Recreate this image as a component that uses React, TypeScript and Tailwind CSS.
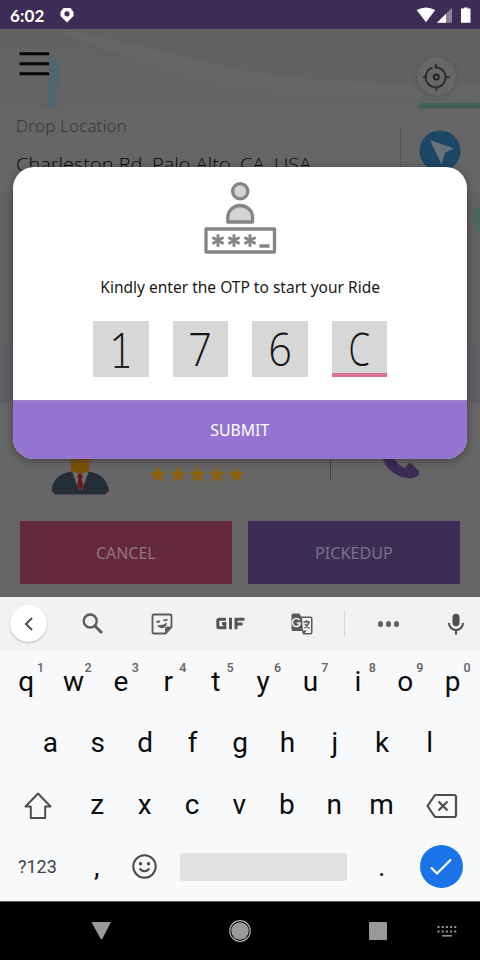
import React from 'react';

const row1 = ['q', 'w', 'e', 'r', 't', 'y', 'u', 'i', 'o', 'p'];
const row2 = ['a', 's', 'd', 'f', 'g', 'h', 'j', 'k', 'l'];
const row3 = ['z', 'x', 'c', 'v', 'b', 'n', 'm'];

function StatusBar() {
  return (
    <header className="flex h-[29px] shrink-0 items-center bg-[#3b2d55] pl-[10px] pr-[9px] text-white">
      <span className="w-[50px] pt-px font-['Lato'] text-[17px] font-bold leading-none tracking-[0.1px]">6:02</span>
      <svg className="h-4 w-[14px]" viewBox="0 0 14 16">
        <path fill="#fff" fillRule="evenodd" d="M3.5 1h7L13.5 5v4L7 15.6.5 9V5ZM7 4.2a2.6 2.6 0 1 0 0 5.2 2.6 2.6 0 0 0 0-5.2Z" />
      </svg>
      <svg className="ml-auto h-4 w-[55px]" viewBox="0 0 55 16">
        <path fill="#fff" d="M.7 3Q10 -2.2 19.2 3L10 15.3Z" />
        <path fill="#8a8199" d="M36 .8V15.8H21Z" />
        <path fill="#fff" d="M30 6.8V15.8H21Z" />
        <path fill="#fff" d="M45 1.6h2.7V.4h4v1.2h2.8V15.8H45Z" />
      </svg>
    </header>
  );
}

function MapHeader() {
  return (
    <div className="relative h-20 shrink-0 overflow-hidden bg-[#626262]">
      <svg className="h-20 w-full" viewBox="0 29 480 80">
        <path fill="#646464" d="M0 48Q110 50 230 77Q350 99 480 96V109H0Z" />
        <path fill="#666666" d="M64 29Q150 48 240 70Q330 86 480 83V97Q340 103 225 86Q140 66 64 33Z" />
        <path fill="#526672" d="M49 59 59.5 60 56 108H47Z" />
        <path fill="#40605a" d="M421 103H480V108.5H419V105Z" />
        <path stroke="#050505" strokeWidth="2.9" d="M19.5 53.8H49M19.5 63.8H49M19.5 73.7H49" />
      </svg>
      <div className="absolute left-[416.5px] top-[28px] h-[39px] w-[39px] rounded-full bg-[#676767] shadow-[0_1px_5px_rgba(0,0,0,0.18)]">
        <svg className="h-full w-full" viewBox="0 0 39 39" fill="none" stroke="#242424" strokeWidth="1.7">
          <path d="M18.8 7V10.700H21.500A10 10 0 1 1 15.300 10.800M19.300 29.500V33.500M6 20H10M29 20H32.500" />
          <circle cx="19.3" cy="20" r="2.5" strokeWidth="2" />
        </svg>
      </div>
    </div>
  );
}

function DropPanel() {
  return (
    <div className="flex h-[84px] shrink-0 bg-[#666666]">
      <div className="ml-4 mt-[7px] w-[384px] whitespace-nowrap font-['Open_Sans'] font-light">
        <p className="w-max origin-left scale-x-[1.06] text-[16px] leading-5 tracking-[0.2px] text-[#343434]">Drop Location</p>
        <p className="mt-4 w-max origin-left scale-x-[1.11] text-[18px] leading-6 text-[#080808]">Charleston Rd, Palo Alto, CA, USA</p>
      </div>
      <div className="mt-[19px] h-[60px] w-px bg-[#575757]" />
      <svg className="ml-[18px] mt-[21px] h-[42px] w-[42px]" viewBox="0 0 42 42">
        <circle cx="21" cy="21" r="20.5" fill="#1d4767" />
        <path fill="#6a7277" d="m11 10 24 8.5-9 4.2-3.5 11.8Z" />
      </svg>
    </div>
  );
}

function DriverCard() {
  return (
    <section className="flex h-[194px] shrink-0 flex-col bg-[#666666]">
      <svg className="h-[118px] w-full" viewBox="0 403 480 118">
        <path fill="#7c5215" d="M67 452H94V459L89 462V470L80 479 71 470V462Z" />
        <path fill="#7e4e07" d="M71 464 80 467 89 464V471L80 475 71 471Z" />
        <path fill="#232e36" d="M72 471.5Q59 473 54 482 51 488 52 491L55 494.5H105L109 491Q109 487 106 482 101 473 88 471.5L80 480Z" />
        <path fill="#6d6c6d" d="M72 471 80 474 89 471 82 490H78.5Z" />
        <path fill="#641a1d" d="m80 473 3 3-1.5 3L83.5 486 80 491 77 486 78.5 479 77 476Z" />
        {[158, 177.7, 197.3, 216.9, 236.5].map((x) => (
          <path key={x} transform={`translate(${x} 474.5)`} fill="#8d6010" d="M0-8.2 2.4-3 8.2-2.4 3.8 1.3 5.1 7.3 0 4.3-5.1 7.3-3.8 1.3-8.2-2.4-2.4-3Z" />
        ))}
        <path stroke="#444" d="M330.5 440V481" />
        <path fill="#3b2d55" d="M383 459Q386 470 399 476 410 480 416 477 420 475 419 471L412 464Q410 462 408 464L405 468Q397 465 394 458Z" />
      </svg>
      <div className="ml-5 flex gap-4 font-['Noto_Sans'] text-[17px] leading-none">
        <div className="flex h-[63px] w-[212px] items-center justify-center bg-[#64293d] text-[#927680]">
          <span className="scale-x-[0.94]">CANCEL</span>
        </div>
        <div className="flex h-[63px] w-[212px] items-center justify-center bg-[#3b2d55] text-[#7a7289]">
          <span className="scale-x-[0.95]">PICKEDUP</span>
        </div>
      </div>
    </section>
  );
}

function OtpIcon() {
  return (
    <svg className="ml-[190.500px] mt-[14px] h-[73px] w-[73px]" viewBox="203.5 181 73 73" fill="none" stroke="#858585" strokeWidth="3.3" strokeLinejoin="round" strokeLinecap="round">
      <circle cx="239.7" cy="191.2" r="7.6" fill="#d4d4d4" />
      <path fill="#d4d4d4" d="M227.3 222V217.5A12.4 12 0 0 1 252.1 217.5V222Z" />
      <rect x="205.5" y="229" width="68.5" height="23" fill="#fff" />
      {[217.5, 233.5, 249.5].map((x) => (
        <path key={x} strokeWidth="3" d={`M${x} 235.5V245.5M${x - 4.5} 238 ${x + 4.5} 243M${x + 4.5} 238 ${x - 4.5} 243`} />
      ))}
      <path strokeLinecap="butt" d="M259 246H269" />
    </svg>
  );
}

function OtpDialog() {
  return (
    <div className="absolute left-[13px] top-[167px] flex h-[292px] w-[454px] flex-col overflow-hidden rounded-[21px] bg-white shadow-[0_2px_8px_rgba(0,0,0,0.35)]">
      <OtpIcon />
      <p className="mt-[21px] whitespace-nowrap text-center font-['Noto_Sans'] text-[16px] leading-6 text-[#191919]">
        <span className="inline-block scale-x-[0.97]">Kindly enter the OTP to start your Ride</span>
      </p>
      <div className="ml-20 mt-[22px] flex gap-6 font-['Open_Sans'] text-[46px] font-[350] leading-none text-[#141414]">
        {['1', '7', '6', 'C'].map((c) => (
          <div key={c} className={'flex h-14 w-[55.5px] items-center justify-center bg-[#d7d7d7] pb-0.5 ' + (c === 'C' ? 'border-b-4 border-[#dc7096] pt-1' : '')}>
            <span className={'relative ' + (c === 'C' ? 'scale-x-[0.75]' : 'scale-x-[0.9]')}>
              {c}
              {c === '1' && <i className="absolute bottom-[3.500px] left-[6px] h-[2px] w-4 bg-[#222]" />}
            </span>
          </div>
        ))}
      </div>
      <button className="mt-auto flex h-[59px] items-center justify-center border-t-2 border-[#9b80cc] bg-[#9473d1] pb-0.5 font-['Noto_Sans'] text-[17px] leading-none text-white">
        <span className="scale-x-[0.93]">SUBMIT</span>
      </button>
    </div>
  );
}

function Toolbar() {
  return (
    <div className="flex h-[53px] items-center bg-[#f1f2f4]">
      <div className="ml-[10px] flex h-[37px] w-[37px] items-center justify-center rounded-full bg-white shadow-[0_1px_2px_rgba(0,0,0,0.25)]">
        <svg className="h-4 w-4" viewBox="0 0 16 16" fill="none" stroke="#555" strokeWidth="2.2"><path d="M11 2 5 8l6 6" /></svg>
      </div>
      <svg className="ml-[34px] mt-px h-6 w-6" viewBox="0 0 24 24" fill="none" stroke="#5b5c5e" strokeWidth="2.4">
        <circle cx="9.2" cy="9" r="6.5" /><path strokeWidth="3" d="m14 14 7 7" />
      </svg>
      <svg className="ml-[45px] h-6 w-6" viewBox="0 0 24 24" fill="none" stroke="#5b5c5e" strokeWidth="1.8">
        <path d="M4 2.500H20Q21.500 2.500 21.500 4V15L15.500 21.500H4Q2.500 21.500 2.500 20V4Q2.500 2.500 4 2.500Z" />
        <path fill="#5b5c5e" stroke="none" d="M22 14.500 15 21.500V17Q15 14.500 17.500 14.500Z" />
        <path d="M6.500 10 10 9.300M13.500 8.500 17.500 7.700" />
        <path fill="#5b5c5e" stroke="none" d="M7.500 13Q13 13.700 17 10.500 16.500 15.500 12.500 16.200 9 16.500 7.500 13Z" />
      </svg>
      <svg className="ml-[42px] h-[13px] w-[29px]" viewBox="0 0 29 13" fill="none" stroke="#555" strokeWidth="3">
        <path d="M10 2.200H3.500Q1.800 2.200 1.800 4V9Q1.800 10.800 3.500 10.800H8.800V6.500H6M14.500.7V12.300M20 12.300V2.200H28.500M20 7H26.500" />
      </svg>
      <svg className="ml-[45px] mt-px h-6 w-6" viewBox="0 0 24 24" fill="#58595b">
        <path d="M3 1.500H9.500L11 4.500H20.500Q22.500 4.500 22.500 6.500V20.500Q22.500 22.500 20.500 22.500H13L12 19H3Q1.500 19 1.500 17.500V3Q1.500 1.500 3 1.500Z" />
        <path fill="#f1f2f4" d="M12 6H21V21H14.500L17 18.500H13Z" />
        <path fill="none" stroke="#f1f2f4" strokeWidth="1.600" d="M9.500 8A4 4 0 1 0 10 12.200V11H6.800" />
        <path fill="none" stroke="#58595b" strokeWidth="1.400" d="M13.500 10H20M16.500 8V10M19 10Q18 14 14.500 16M15 12Q17 15 19.500 16.500" />
      </svg>
      <div className="ml-[30px] h-[27px] w-px bg-[#d5d6d8]" />
      <div className="ml-[32.500px] mt-px flex gap-[2.500px]">
        {[1, 2, 3].map((n) => <i key={n} className="h-[5.500px] w-[5.500px] rounded-full bg-[#606164]" />)}
      </div>
      <svg className="ml-[45px] h-6 w-6" viewBox="0 0 24 24" fill="none" stroke="#4c4d4f">
        <path strokeWidth="7" strokeLinecap="round" d="M12 5.200V10.800" /><path strokeWidth="2" d="M5 11A7 7 0 0 0 19 11M12 18V22.500" />
      </svg>
    </div>
  );
}

function Keyboard() {
  return (
    <section className="h-[304px] shrink-0 bg-[#f7f9fb] font-['Roboto'] text-[28px] leading-none text-[#0c0c0c]">
      <Toolbar />
      <div className="flex h-[61.500px] px-[2.500px]">
        {row1.map((k, i) => (
          <div key={k} className="relative flex w-[47.400px] items-center justify-center pt-[3px]">
            {k}
            <sup className="absolute left-[34.500px] top-[10.500px] text-[12.500px] font-medium leading-[14px] text-[#626366]">{(i + 1) % 10}</sup>
          </div>
        ))}
      </div>
      <div className="flex h-[61.500px] items-center justify-center pt-0.5">
        {row2.map((k) => <div key={k} className="w-[47.400px] text-center">{k}</div>)}
      </div>
      <div className="flex h-[61.500px] items-center pt-0.5">
        <svg className="ml-6 mt-0.5 h-7 w-7" viewBox="0 0 28 28" fill="none" stroke="#4d4e50" strokeWidth="2" strokeLinejoin="round">
          <path d="M14 1.500 26.500 14.500H21.200V26H6.800V14.500H1.500Z" />
        </svg>
        <div className="ml-[21.500px] flex">
          {row3.map((k) => <div key={k} className="w-[47.400px] text-center">{k}</div>)}
        </div>
        <svg className="ml-[20.500px] mt-[3px] h-[26px] w-[32px]" viewBox="0 0 32 26" fill="none" stroke="#4d4e50" strokeWidth="2.200" strokeLinejoin="round">
          <path d="M9 2H28Q30 2 30 4V22Q30 24 28 24H9L1.500 13Z" /><path d="m12.500 8.500 9 9M21.500 8.500l-9 9" />
        </svg>
      </div>
      <div className="flex h-[61.500px] items-center pt-[2.500px]">
        <span className="ml-[18px] w-10 text-[18px] text-[#414244]">?123</span>
        <span className="ml-[36px] w-3">,</span>
        <svg className="ml-[26px] h-[25px] w-[25px]" viewBox="0 0 25 25" fill="none" stroke="#48494b" strokeWidth="2">
          <circle cx="12.500" cy="12.500" r="11.200" /><path d="M7.500 14.500Q12.500 20 17.500 14.500" />
          <circle cx="8.500" cy="9.800" r="1.700" fill="#48494b" stroke="none" /><circle cx="16.500" cy="9.800" r="1.700" fill="#48494b" stroke="none" />
        </svg>
        <div className="ml-[22.500px] h-7 w-[167px] rounded-[3px] bg-[#e1e3e2]" />
        <span className="ml-[31.500px] w-[41.500px]">.</span>
        <div className="flex h-[43px] w-[43px] items-center justify-center rounded-full bg-[#1a73e8]">
          <svg className="h-6 w-6" viewBox="0 0 24 24" fill="none" stroke="#fff" strokeWidth="2.200"><path d="m2 12.500 6 6L22 4.500" /></svg>
        </div>
      </div>
    </section>
  );
}

function NavBar() {
  return (
    <nav className="flex h-[59px] shrink-0 items-center border-t border-[#555] bg-black">
      <svg className="ml-[91px] h-[18px] w-5" viewBox="0 0 20 18"><path fill="#999" d="M1.500 0H18.800Q20 0 19.500 1L11.500 16.500Q10.500 18 9.500 16.500L.9 1Q.5 0 1.500 0Z" /></svg>
      <svg className="ml-[118px] h-[22px] w-[22px]" viewBox="0 0 22 22"><circle cx="11" cy="11" r="10.300" fill="#000" stroke="#aaa" strokeWidth="1.200" /><circle cx="11" cy="11" r="8.700" fill="#999" /></svg>
      <div className="ml-[117.500px] h-[18.500px] w-[18.500px] rounded-[1px] bg-[#999]" />
      <svg className="ml-[50px] h-3 w-5" viewBox="0 0 20 12" stroke="#999">
        <path strokeWidth="2" strokeDasharray="2 2.200" d="M.500 2H20M.500 6.500H20" /><path strokeWidth="1.500" d="M5 10.800H15" />
      </svg>
    </nav>
  );
}

export default function App() {
  return (
    <main className="relative flex h-[960px] w-[480px] flex-col overflow-hidden bg-black">
      <StatusBar />
      <MapHeader />
      <DropPanel />
      <div className="relative h-[151px] shrink-0 overflow-hidden bg-[#626262]">
        <div className="absolute left-[473px] top-[9px] h-[34px] w-5 rounded-l-full bg-[#49675f]" />
      </div>
      <div className="h-[59px] shrink-0 bg-[#5f5e65]" />
      <DriverCard />
      <Keyboard />
      <NavBar />
      <OtpDialog />
    </main>
  );
}
